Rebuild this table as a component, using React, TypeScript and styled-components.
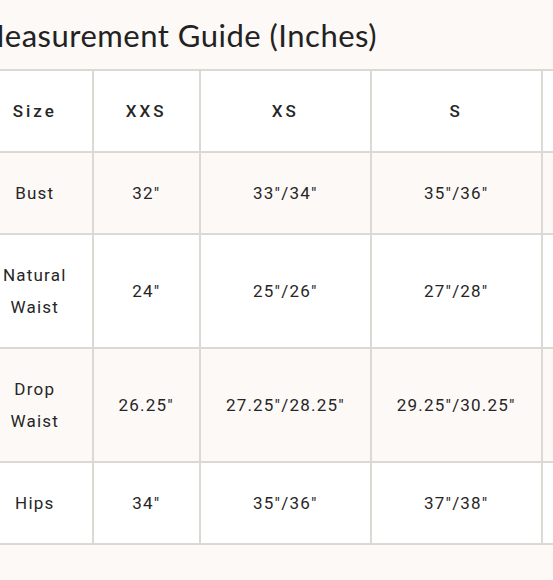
import React from "react";
import styled, { createGlobalStyle } from "styled-components";

const GlobalStyle = createGlobalStyle`
  html, body {
    margin: 0;
    padding: 0;
    background: #fdf9f7;
    overflow: hidden;
  }
`;

const Page = styled.div`
  width: 553px;
  height: 580px;
  overflow: hidden;
  background: #fdf9f7;
`;

const Guide = styled.section`
  margin-left: -24px;
  padding-top: 15px;
`;

const Title = styled.h2`
  margin: 0 0 14px;
  font-family: "Lato", "Liberation Sans", sans-serif;
  font-weight: 400;
  font-size: 31px;
  line-height: 40px;
  letter-spacing: 0.5px;
  color: #222;
  white-space: nowrap;
`;

const Table = styled.table`
  border-collapse: collapse;
  font-family: "Roboto", "Liberation Sans", sans-serif;
  font-size: 17px;
  line-height: 32px;
  color: #262626;
  white-space: nowrap;
`;

const Row = styled.tr<{ $tinted?: boolean }>`
  background: ${(p) => (p.$tinted ? "#fdf9f7" : "#ffffff")};
`;

const Cell = styled.td<{ $head?: boolean }>`
  border: 2px solid #dcd9d4;
  padding: 24px 25px;
  text-align: center;
  vertical-align: middle;
  font-weight: ${(p) => (p.$head ? 500 : 400)};
  letter-spacing: ${(p) => (p.$head ? "3px" : "1.2px")};
`;

const sizes = ["XXS", "XS", "S", "M", "L", "XL"];

const rows: { label: React.ReactNode; values: string[] }[] = [
  { label: "Bust", values: ['32"', '33"/34"', '35"/36"', '37"/38"', '39"/40"', '41"/42"'] },
  {
    label: (
      <>
        Natural
        <br />
        Waist
      </>
    ),
    values: ['24"', '25"/26"', '27"/28"', '29"/30"', '31"/32"', '33"/34"'],
  },
  {
    label: (
      <>
        Drop
        <br />
        Waist
      </>
    ),
    values: ['26.25"', '27.25"/28.25"', '29.25"/30.25"', '31.25"/32.25"', '33.25"/34.25"', '35.25"/36.25"'],
  },
  { label: "Hips", values: ['34"', '35"/36"', '37"/38"', '39"/40"', '41"/42"', '43"/44"'] },
];

export default function App() {
  return (
    <Page>
      <GlobalStyle />
      <Guide>
        <Title>Measurement Guide (Inches)</Title>
        <Table>
          <tbody>
            <Row>
              <Cell $head>Size</Cell>
              {sizes.map((s) => (
                <Cell $head key={s}>
                  {s}
                </Cell>
              ))}
            </Row>
            {rows.map((r, i) => (
              <Row key={i} $tinted={i % 2 === 0}>
                <Cell>{r.label}</Cell>
                {r.values.map((v, j) => (
                  <Cell key={j}>{v}</Cell>
                ))}
              </Row>
            ))}
          </tbody>
        </Table>
      </Guide>
    </Page>
  );
}
